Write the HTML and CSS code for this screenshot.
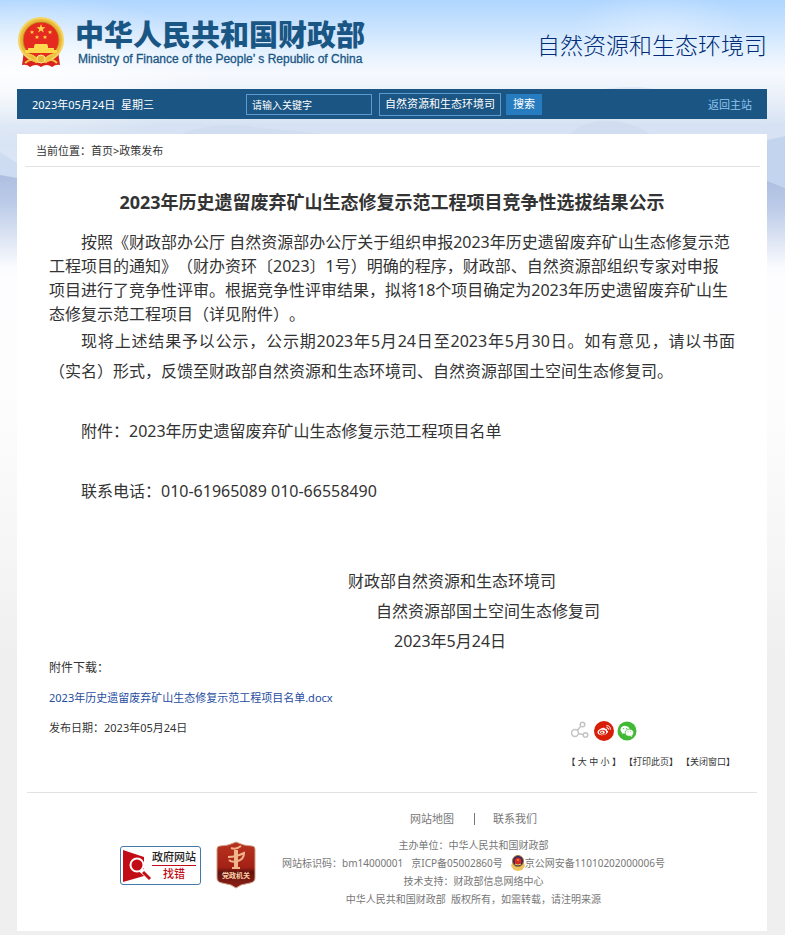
FILE: index.html
```html
<!DOCTYPE html>
<html lang="zh-CN">
<head>
    <meta charset="UTF-8">
    <meta name="viewport" content="width=device-width, initial-scale=1.0">
    <title>2023年历史遗留废弃矿山生态修复示范工程项目竞争性选拔结果公示</title>
    <link rel="stylesheet" href="styles.css">
</head>
<body>
    <!-- sky and mountains -->
    <svg class="sky" viewBox="0 0 785 660" preserveAspectRatio="none" aria-hidden="true">
        <defs>
            <linearGradient id="skyFill" x1="0" y1="0" x2="0" y2="1">
                <stop offset="0" stop-color="#afd6ff"/>
                <stop offset="0.04" stop-color="#c8e2fe"/>
                <stop offset="0.08" stop-color="#e4f1fe"/>
                <stop offset="0.11" stop-color="#f6f9fe"/>
                <stop offset="0.14" stop-color="#edf2fa"/>
                <stop offset="0.19" stop-color="#d6e2f3"/>
                <stop offset="0.27" stop-color="#dce7f6"/>
                <stop offset="0.42" stop-color="#fdfdff"/>
                <stop offset="0.6" stop-color="#fdfdfd"/>
                <stop offset="0.8" stop-color="#f7f7f7"/>
                <stop offset="1" stop-color="#efefef"/>
            </linearGradient>
            <linearGradient id="hillFill" x1="0" y1="0" x2="0" y2="1">
                <stop offset="0" stop-color="#adbfe1"/>
                <stop offset="0.3" stop-color="#bccbe8"/>
                <stop offset="1" stop-color="#fcfdff"/>
            </linearGradient>
            <radialGradient id="glow">
                <stop offset="0" stop-color="#fff" stop-opacity="0.8"/>
                <stop offset="1" stop-color="#fff" stop-opacity="0"/>
            </radialGradient>
        </defs>
        <rect width="785" height="660" fill="url(#skyFill)"/>
        <ellipse cx="20" cy="70" rx="200" ry="75" fill="url(#glow)"/>
        <ellipse cx="660" cy="30" rx="90" ry="40" fill="url(#glow)" opacity="0.4"/>
        <path d="M180 134q40-14 80-6q30 2 60 6zM590 92q40-10 80 0zM570 134q20-18 50-12q20 4 30 12z" fill="#c9d6ec" opacity="0.4"/>
        <path d="M0 152l17 11v15H0z" fill="#cddcf1"/>
        <path d="M0 175l17 3v92H0z" fill="url(#hillFill)"/>
        <path d="M767 140l18-4v52l-18-6z" fill="#c3d5ee"/>
        <path d="M767 181l18 7v82h-18z" fill="url(#hillFill)"/>
    </svg>

    <div class="page">
        <header class="header">
            <a class="brand" href="#">
                <svg class="emblem" viewBox="0 0 48 52" aria-hidden="true">
                    <path d="M7 34L5 48q5-1 8 2q6-4 11 0q6-4 11 0q4-3 8-2L41 34z" fill="#d9231c"/>
                    <circle cx="24" cy="23" r="22" fill="#e9b93c" stroke="#f5d561" stroke-width="2"/>
                    <circle cx="24" cy="23" r="18" fill="#e52b20" stroke="#c98b1d"/>
                    <path d="M24 7l1.100 3.200h3.400l-2.700 2l1 3.300l-2.800-2l-2.800 2l1-3.300l-2.700-2h3.400z" fill="#ffd84d"/>
                    <g fill="#ffd84d">
                        <path d="M15 13l.6 1.400h1.600l-1.200 1l.4 1.600l-1.400-.9l-1.400.9l.4-1.600l-1.200-1h1.600z"/>
                        <path d="M33 13l.6 1.400h1.600l-1.200 1l.4 1.600l-1.400-.9l-1.400.9l.4-1.600l-1.200-1h1.600z"/>
                        <path d="M20 18l.6 1.400h1.600l-1.200 1l.4 1.600l-1.400-.9l-1.400.9l.4-1.600l-1.200-1h1.600z"/>
                        <path d="M28 18l.6 1.400h1.600l-1.200 1l.4 1.600l-1.400-.9l-1.400.9l.4-1.600l-1.200-1h1.600z"/>
                        <path d="M18 27h12l1 2v2h6v2h3v3H8v-3h3v-2h6v-2z"/>
                    </g>
                    <path d="M9 38q7-1 10 4q5-6 10 0q3-5 10-4M8 46q7-6 11-1q5-6 10 0q5-5 11 1" fill="none" stroke="#f3c544" stroke-width="2"/>
                    <circle cx="24" cy="42" r="4" fill="#e9b93c" stroke="#fbe28a"/>
                </svg>
                <span class="brand-text">
                    <span class="brand-cn">中华人民共和国财政部</span>
                    <span class="brand-en">Ministry of Finance of the People’ s Republic of China</span>
                </span>
            </a>
            <div class="dept">自然资源和生态环境司</div>
        </header>

        <nav class="toolbar">
            <span class="today">2023年05月24日&nbsp; 星期三</span>
            <form class="search">
                <input class="search-input" type="text" value="请输入关键字" aria-label="请输入关键字">
                <button class="search-scope" type="button">自然资源和生态环境司</button>
                <button class="search-btn" type="button">搜索</button>
            </form>
            <a class="back" href="#">返回主站</a>
        </nav>

        <main class="content">
            <div class="crumbs">当前位置：<a href="#">首页</a>&gt;<a href="#">政策发布</a></div>

            <article class="article">
                <h1>2023年历史遗留废弃矿山生态修复示范工程项目竞争性选拔结果公示</h1>
                <p class="lead">按照《财政部办公厅 自然资源部办公厅关于组织申报2023年历史遗留废弃矿山生态修复示范工程项目的通知》（财办资环〔2023〕1号）明确的程序，财政部、自然资源部组织专家对申报项目进行了竞争性评审。根据竞争性评审结果，拟将18个项目确定为2023年历史遗留废弃矿山生态修复示范工程项目（详见附件）。</p>
                <p class="justify">现将上述结果予以公示，公示期2023年5月24日至2023年5月30日。如有意见，请以书面（实名）形式，反馈至财政部自然资源和生态环境司、自然资源部国土空间生态修复司。</p>
                <p class="spaced">附件：2023年历史遗留废弃矿山生态修复示范工程项目名单</p>
                <p class="spaced">联系电话：010-61965089 010-66558490</p>
                <div class="sign">
                    <p class="sign-mof">财政部自然资源和生态环境司</p>
                    <p class="sign-mnr">自然资源部国土空间生态修复司</p>
                    <p class="sign-date">2023年5月24日</p>
                </div>

                <div class="download">
                    <div class="download-title">附件下载：</div>
                    <a href="#">2023年历史遗留废弃矿山生态修复示范工程项目名单.docx</a>
                </div>

                <div class="meta">
                    <span>发布日期：2023年05月24日</span>
                    <div class="share">
                        <a href="#" aria-label="分享">
                            <svg width="20" height="20" viewBox="0 0 20 20" fill="none" stroke="#c4c4c4" stroke-width="1.500">
                                <circle cx="4" cy="12" r="3.400"/>
                                <circle cx="11.500" cy="3.500" r="2.300"/>
                                <circle cx="14.500" cy="14" r="2.300"/>
                                <path d="M6.300 9.300l3.600-4M7.500 12.700l4.700.8"/>
                            </svg>
                        </a>
                        <a href="#" aria-label="微博">
                            <svg width="20" height="20" viewBox="0 0 20 20">
                                <circle cx="10" cy="10" r="10" fill="#d81e06"/>
                                <path d="M8.500 7c1.500-.7 2.700-.3 2.300 1c1.500-.4 2.600 0 2 1.300c1.300.4 1.500 1.300.9 2.300c-1.200 2-4 3-6.500 2.700c-2.500-.2-4.200-1.700-3.700-3.500C4 9.200 6.500 7.500 8.500 7z" fill="#fff"/>
                                <ellipse cx="8.600" cy="11.200" rx="3.600" ry="2.500" fill="#d81e06"/>
                                <ellipse cx="8.400" cy="11.300" rx="2.300" ry="1.800" fill="#fff"/>
                                <circle cx="8" cy="11.500" r=".9" fill="#d81e06"/>
                                <path d="M12.500 6.600q2.200-.2 2 2M12.300 4.700q4.300-.3 4 4" fill="none" stroke="#fff"/>
                            </svg>
                        </a>
                        <a href="#" aria-label="微信">
                            <svg width="20" height="20" viewBox="0 0 20 20">
                                <circle cx="10" cy="10" r="9.500" fill="#42b934"/>
                                <path d="M8.200 4.800c-2.700 0-4.600 1.700-4.600 3.900c0 1.200.6 2.200 1.600 2.900l-.4 1.500l1.700-.9l1.900.3z" fill="#fff"/>
                                <ellipse cx="8.200" cy="8.700" rx="4.500" ry="3.800" fill="#fff"/>
                                <ellipse cx="12.400" cy="11.700" rx="4.200" ry="3.500" fill="#fff" stroke="#42b934" stroke-width="0.700"/>
                                <path d="M13 14.800l2.200 1.100l-.4-1.600z" fill="#fff"/>
                                <g fill="#42b934">
                                    <circle cx="6.700" cy="7.600" r=".6"/>
                                    <circle cx="9.700" cy="7.600" r=".6"/>
                                    <circle cx="11" cy="10.800" r=".5"/>
                                    <circle cx="13.800" cy="10.800" r=".5"/>
                                </g>
                            </svg>
                        </a>
                    </div>
                </div>

                <div class="tools">
                    <span class="sizes">【 <a href="#">大</a> <a href="#">中</a> <a href="#">小</a> 】</span>
                    <span>【<a href="#">打印此页</a>】</span>
                    <span>【<a href="#">关闭窗口</a>】</span>
                </div>
            </article>

            <footer class="footer">
                <div class="badges">
                    <a class="report" href="#">
                        <svg width="30" height="32" viewBox="0 0 30 32" aria-hidden="true">
                            <path d="M1 0l21 7v19L1 32z" fill="#c30d16"/>
                            <circle cx="15" cy="15" r="6.500" fill="#c30d16" stroke="#fff" stroke-width="2"/>
                            <path d="M19 20l9 8" stroke="#fff" stroke-width="5"/>
                            <path d="M21 22l7 7" stroke="#c30d16" stroke-width="3"/>
                        </svg>
                        <span class="report-text"><span>政府网站</span><span class="report-red">找错</span></span>
                    </a>
                    <a class="party" href="#" aria-label="党政机关">
                        <svg width="40" height="48" viewBox="0 0 40 48">
                            <defs>
                                <linearGradient id="shield" x1="0" y1="0" x2="0" y2="1">
                                    <stop offset="0" stop-color="#b8331f"/>
                                    <stop offset="0.550" stop-color="#a32116"/>
                                    <stop offset="0.650" stop-color="#62130e"/>
                                    <stop offset="1" stop-color="#8d2017"/>
                                </linearGradient>
                            </defs>
                            <path d="M20 1q8 4 16 4q3 0 3 3v29q0 4-5 5l-9 2l-5 3l-5-3l-9-2q-5-1-5-5V8q0-3 3-3q8 0 16-4z" fill="url(#shield)" stroke="#cfa18a"/>
                            <path d="M18 9h4v17h2v2h-8v-2h2z" fill="#f0b58a"/>
                            <path d="M15 7q5 2 10-2M12 16q8 0 16-4q0 6-6 8q-6 2-9-1" fill="none" stroke="#f0b58a" stroke-width="2"/>
                            <text x="20" y="37" class="party-text">党政机关</text>
                        </svg>
                    </a>
                </div>
                <div class="info">
                    <div class="info-links"><a href="#">网站地图</a><a href="#">联系我们</a></div>
                    <div>主办单位：中华人民共和国财政部</div>
                    <div class="codes">
                        <span>网站标识码：bm14000001</span>
                        <a href="#">京ICP备05002860号</a>
                        <a class="police" href="#">
                            <svg width="14" height="16" viewBox="0 0 14 16" aria-hidden="true">
                                <path d="M1 8h12l1 3l-3 4l-4 1l-4-1l-3-4z" fill="#ecc15e"/>
                                <circle cx="7" cy="6" r="5.500" fill="#27246b" stroke="#a87832"/>
                                <circle cx="7" cy="6" r="3.500" fill="#d8281c"/>
                                <path d="M4 9q3 2 6 0M7 4v2" stroke="#f6cf5c" fill="none"/>
                            </svg>京公网安备11010202000006号</a>
                    </div>
                    <div>技术支持：财政部信息网络中心</div>
                    <div>中华人民共和国财政部&nbsp; 版权所有，如需转载，请注明来源</div>
                </div>
            </footer>
        </main>
    </div>
</body>
</html>
```

FILE: styles.css
```css
* {
    box-sizing: border-box;
}
body {
    margin: 0;
    background: #efefef;
    color: #333;
    font-family: "Noto Sans", "Noto Sans CJK SC", sans-serif;
    font-size: 11px;
    text-spacing-trim: space-all;
}
a {
    color: inherit;
    text-decoration: none;
}
p,
h1 {
    margin: 0;
}
svg {
    display: block;
}
.sky {
    position: absolute;
    top: 0;
    left: 0;
    width: 100%;
    height: 660px;
    z-index: -1;
}
.page {
    margin: 0 18px 4px 17px;
}

/* header */
.header {
    height: 89px;
    display: flex;
    justify-content: space-between;
    align-items: center;
}
.brand {
    display: flex;
    align-items: center;
    gap: 10px;
    padding-bottom: 4px;
}
.emblem {
    width: 48px;
    height: 52px;
}
.brand-text {
    display: flex;
    flex-direction: column;
    gap: 5px;
    color: #1a5684;
}
.brand-cn {
    font-family: "Noto Sans CJK SC", sans-serif;
    font-size: 29px;
    font-weight: 900;
    line-height: 28px;
}
.brand-en {
    padding-left: 3px;
    font-family: "Liberation Sans", Arial, sans-serif;
    font-size: 12px;
    line-height: 14px;
    -webkit-text-stroke: 0.3px #1a5684;
}
.dept {
    color: #002c77;
    font-size: 23px;
    font-weight: 300;
    line-height: 34px;
}

/* search bar */
.toolbar {
    display: flex;
    align-items: center;
    height: 30px;
    padding: 0 15px;
    background: #1a5583;
    color: #fff;
}
.today {
    flex: 0 0 214px;
}
.search {
    display: flex;
    align-items: center;
    gap: 5px;
}
.search-input,
.search-scope,
.search-btn {
    height: 21px;
    margin: 0;
    padding: 0 5px;
    border: 1px solid #5b9bd0;
    background: none;
    color: #fff;
    font-family: inherit;
    font-size: 10px;
    line-height: 16px;
}
.search-input {
    width: 126px;
    margin-right: 2px;
}
.search-scope {
    width: 122px;
    height: 23px;
    font-size: 11px;
}
.search-btn {
    width: 36px;
    border: 0;
    background: #277bbf;
    font-size: 11px;
}
.back {
    margin-left: auto;
    color: #8fc4ee;
}

/* content */
.content {
    margin-top: 15px;
    padding: 0 7px 0 8px;
    background: #fff;
}
.crumbs {
    height: 33px;
    padding-left: 11px;
    border-bottom: 1px solid #e2e2e2;
    line-height: 34px;
}
.article {
    padding: 20px 25px 20px 24px;
}
.article h1 {
    margin-bottom: 13px;
    font-size: 18px;
    line-height: 30px;
    text-align: center;
}
.article p {
    font-size: 16px;
    line-height: 30px;
    text-indent: 32px;
}
.article .lead {
    padding-right: 2px;
    line-height: 24px;
}
.article .justify {
    text-align: justify;
}
.article .spaced {
    margin-top: 30px;
}
.sign {
    margin-top: 60px;
}
.article .sign p {
    text-indent: 0;
}
.sign-mof {
    padding-left: 299px;
}
.sign-mnr {
    padding-left: 327px;
}
.sign-date {
    padding-left: 345px;
}
.download {
    padding-top: 1px;
    line-height: 22px;
}
.download a {
    color: #1f4da1;
}
.download-title {
    margin-bottom: 8px;
    font-size: 12px;
}
.meta {
    display: flex;
    justify-content: space-between;
    margin-top: 8px;
    line-height: 22px;
}
.share {
    display: flex;
    gap: 3px;
    padding: 4px 98px 0 0;
}
.tools {
    display: flex;
    justify-content: flex-end;
    gap: 3px;
    margin-top: 11px;
    font-size: 9px;
    line-height: 20px;
}

/* footer */
.footer {
    display: flex;
    gap: 26px;
    margin: 0 3px 0 2px;
    padding: 17px 0 23px 93px;
    border-top: 1px solid #e2e2e2;
    color: #777;
    font-size: 10px;
    line-height: 18px;
    white-space: nowrap;
}
.badges {
    display: flex;
    gap: 15px;
    padding-top: 31px;
}
.report {
    display: flex;
    align-items: center;
    width: 81px;
    height: 39px;
    margin-top: 5px;
    padding-left: 1px;
    border: 1px solid #437aa9;
    border-radius: 3px;
}
.report-text {
    display: flex;
    flex-direction: column;
    color: #222;
    font-size: 11px;
    font-weight: 500;
    line-height: 16px;
    text-align: center;
}
.report-red {
    border-top: 1px solid #c30d16;
    color: #c30d16;
}
.party-text {
    fill: #ffd0aa;
    font-size: 7px;
    font-weight: 700;
    text-anchor: middle;
}
.info {
    text-align: center;
}
.info-links {
    display: flex;
    justify-content: center;
    margin-bottom: 8px;
    font-size: 11px;
}
.info-links a + a {
    margin-left: 20px;
    padding-left: 18px;
    border-left: 1px solid #777;
    line-height: 12px;
    align-self: center;
}
.codes {
    display: flex;
    justify-content: center;
    gap: 8px;
}
.police {
    display: flex;
    align-items: center;
}
```
